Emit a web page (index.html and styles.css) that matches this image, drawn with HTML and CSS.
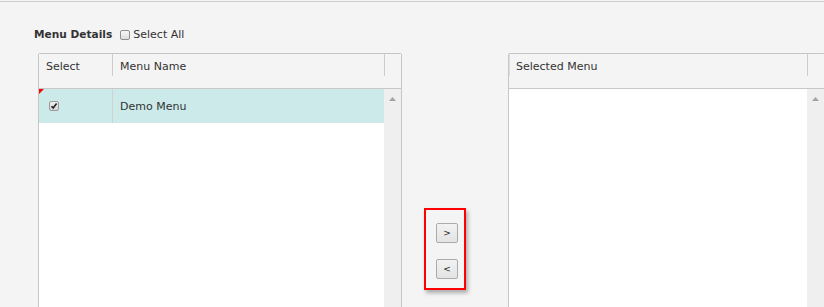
FILE: index.html
```html
<!DOCTYPE html>
<html lang="en">
<head>
    <meta charset="UTF-8">
    <meta name="viewport" content="width=device-width, initial-scale=1.0">
    <title>Menu Details</title>
    <link rel="stylesheet" href="styles.css">
</head>
<body>
    <div id="panel">
        <div class="title-row">
            <span class="title">Menu Details</span>
            <label class="select-all"><span class="cb"></span>Select All</label>
        </div>

        <div class="lists">
            <!-- available menus -->
            <div class="grid grid-left">
                <div class="grid-head">
                    <div class="head-col col-select">Select</div>
                    <div class="head-col col-name">Menu Name</div>
                </div>
                <div class="grid-body">
                    <div class="rows">
                        <div class="row selected">
                            <span class="dirty"></span>
                            <div class="cell cell-select">
                                <span class="cb checked">
                                    <svg width="8" height="8" viewBox="0 0 8 8"><path d="M1.5 4.2 L3.2 6 L6.6 1.6" fill="none" stroke="#222" stroke-width="1.6"/></svg>
                                </span>
                            </div>
                            <div class="cell cell-name">Demo Menu</div>
                        </div>
                    </div>
                    <div class="scrollbar">
                        <svg width="7" height="4" viewBox="0 0 7 4"><polygon points="0,4 3.5,0 7,4" fill="#a3a3a3"/></svg>
                    </div>
                </div>
            </div>

            <div class="mover">
                <div class="mover-box">
                    <button type="button" class="move-btn">&gt;</button>
                    <button type="button" class="move-btn">&lt;</button>
                </div>
            </div>

            <!-- selected menus -->
            <div class="grid grid-right">
                <div class="grid-head">
                    <div class="head-col col-selected">Selected Menu</div>
                </div>
                <div class="grid-body">
                    <div class="rows"></div>
                    <div class="scrollbar">
                        <svg width="7" height="4" viewBox="0 0 7 4"><polygon points="0,4 3.5,0 7,4" fill="#a3a3a3"/></svg>
                    </div>
                </div>
            </div>
        </div>
    </div>
</body>
</html>
```

FILE: styles.css
```css
html, body{
    margin: 0;
    height: 100%;
    overflow: hidden;
    background-color: #f4f4f4;
}
body{
    font-family: "DejaVu Sans", Verdana, sans-serif;
    font-size: 11px;
    color: #333;
    padding-top: 1px;
    box-sizing: border-box;
}
#panel{
    border-top: 1px solid #cdcdcd;
    padding: 26px 0 0 34px;
    width: 900px;
}
.title-row{
    display: flex;
    align-items: center;
    height: 13px;
    line-height: 13px;
}
.title{
    font-weight: bold;
    font-size: 10.6px;
    margin-right: 8px;
}
.select-all{
    display: flex;
    align-items: center;
}
.cb{
    display: inline-flex;
    align-items: center;
    justify-content: center;
    width: 10px;
    height: 10px;
    box-sizing: border-box;
    border: 1px solid #8f8f8f;
    border-radius: 2px;
    background: linear-gradient(#f7f7f7, #dcdcdc);
}
.select-all .cb{
    margin-right: 3px;
}
.cb.checked{
    border-color: #9a9a9a;
    background: linear-gradient(#eeeeee, #d6d6d6);
}
.lists{
    display: flex;
    align-items: flex-start;
    margin: 12px 0 0 4px;
}
.grid{
    height: 300px;
    box-sizing: border-box;
    border: 1px solid #c6c6c6;
    border-radius: 2px 2px 0 0;
    display: flex;
    flex-direction: column;
}
.grid-left{
    width: 364px;
}
.grid-right{
    width: 317px;
}
.grid-head{
    display: flex;
    height: 35px;
    box-sizing: border-box;
    background-color: #f4f4f4;
    border-bottom: 1px solid #c8c8c8;
}
.head-col{
    height: 22px;
    box-sizing: border-box;
    padding: 6px 0 0 7px;
    line-height: 13px;
    border-right: 1px solid #cdcdcd;
    white-space: nowrap;
}
.col-select{
    width: 74px;
}
.col-name{
    width: 272px;
}
.col-selected{
    width: 299px;
    border-left: 1px solid #dddddd;
    padding-left: 6px;
}
.grid-body{
    flex: 1;
    display: flex;
}
.rows{
    flex: 1;
    background-color: white;
}
.row{
    position: relative;
    display: flex;
    height: 34px;
    line-height: 13px;
}
.row.selected{
    background-color: #cbeae9;
}
.dirty{
    position: absolute;
    top: 0;
    left: 0;
    width: 0;
    height: 0;
    border-top: 5px solid #ff0000;
    border-right: 5px solid transparent;
}
.cell{
    box-sizing: border-box;
    padding-top: 11px;
}
.cell-select{
    width: 74px;
    padding-left: 10px;
    border-right: 1px solid #d2d2d2;
}
.cell-select .cb{
    margin-top: 1px;
}
.cell-name{
    padding-left: 7px;
}
.scrollbar{
    width: 17px;
    background-color: #efefef;
    display: flex;
    justify-content: center;
    align-items: flex-start;
    padding-top: 8px;
    box-sizing: border-box;
}
.scrollbar svg{
    display: block;
}
.mover{
    width: 106px;
    padding: 155px 0 0 22px;
    box-sizing: border-box;
}
.mover-box{
    width: 42px;
    height: 82px;
    box-sizing: border-box;
    border: 2px solid #ff0000;
    padding: 13px 0 0 10px;
    box-shadow: 2px 3px 4px rgba(0, 0, 0, 0.3);
    display: flex;
    flex-direction: column;
    gap: 16px;
}
.move-btn{
    width: 22px;
    height: 20px;
    padding: 0;
    margin: 0;
    border: 1px solid #ababab;
    border-radius: 2px;
    background: linear-gradient(#f2f2f2, #e3e3e3);
    font-family: "DejaVu Sans", Verdana, sans-serif;
    font-size: 9px;
    color: #222;
    line-height: 18px;
}
```
